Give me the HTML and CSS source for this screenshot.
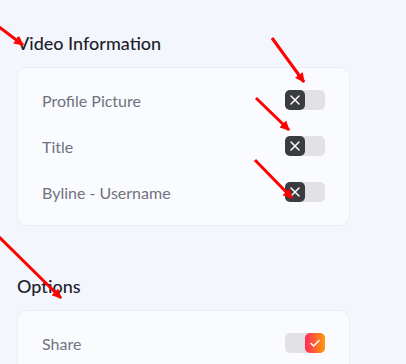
FILE: index.html
```html
<!DOCTYPE html>
<html lang="en">
<head>
    <meta charset="UTF-8">
    <meta name="viewport" content="width=device-width, initial-scale=1.0">
    <title>Video Settings</title>
    <link rel="stylesheet" href="styles.css">
</head>
<body>
    <div class="settings">
        <h2 class="section-title">Video Information</h2>
        <div class="card">
            <div class="row">
                <span class="label">Profile Picture</span>
                <span class="toggle off"><span class="knob"><svg viewBox="0 0 20 20"><path d="M6 6L14 14M14 6L6 14"/></svg></span></span>
            </div>
            <div class="row">
                <span class="label">Title</span>
                <span class="toggle off"><span class="knob"><svg viewBox="0 0 20 20"><path d="M6 6L14 14M14 6L6 14"/></svg></span></span>
            </div>
            <div class="row">
                <span class="label">Byline - Username</span>
                <span class="toggle off"><span class="knob"><svg viewBox="0 0 20 20"><path d="M6 6L14 14M14 6L6 14"/></svg></span></span>
            </div>
        </div>

        <h2 class="section-title">Options</h2>
        <div class="card">
            <div class="row">
                <span class="label">Share</span>
                <span class="toggle on"><span class="knob"><svg viewBox="0 0 20 20"><path d="M6 10.5L8.7 13L14 7.5"/></svg></span></span>
            </div>
        </div>
    </div>

    <!-- annotation arrows -->
    <svg class="arrows" viewBox="0 0 406 364">
        <defs>
            <marker id="head" viewBox="0 0 10 10" refX="9" refY="5" markerWidth="3.6" markerHeight="3.2" orient="auto">
                <path d="M0 0L10 5L0 10z" fill="#ff0000"/>
            </marker>
        </defs>
        <line x1="-2" y1="26" x2="23" y2="45" marker-end="url(#head)"/>
        <line x1="272" y1="38" x2="304" y2="82" marker-end="url(#head)"/>
        <line x1="256" y1="98" x2="289" y2="130" marker-end="url(#head)"/>
        <line x1="255" y1="160" x2="292" y2="198" marker-end="url(#head)"/>
        <line x1="-2" y1="236" x2="61" y2="298" marker-end="url(#head)"/>
    </svg>
</body>
</html>
```

FILE: styles.css
```css
body {
    font-family: 'Lato', 'Noto Sans', sans-serif;
    margin: 0;
    background: #f4f6fd;
    color: #1d1f2b;
    overflow: hidden;
}

.settings {
    width: 333px;
    padding: 31px 0 0 17px;
}

.section-title {
    font-size: 18px;
    font-weight: 500;
    line-height: 24px;
    margin: 0 0 12px 0;
    color: #1d1f2b;
}

.card + .section-title {
    margin-top: 48px;
}

.card {
    background: #fafbff;
    border: 1px solid #eceef5;
    border-radius: 10px;
    padding: 9px 24px 10px 24px;
}

.row {
    height: 46px;
    display: flex;
    align-items: center;
    justify-content: space-between;
}

.label {
    font-size: 16px;
    color: #6f7380;
}

.toggle {
    width: 40px;
    height: 20px;
    border-radius: 5px;
    background: #e2e2e4;
    display: flex;
}

.toggle.on {
    justify-content: flex-end;
}

.knob {
    width: 20px;
    height: 20px;
    border-radius: 5px;
    display: flex;
    align-items: center;
    justify-content: center;
}

.toggle.off .knob {
    background: #3a3c40;
}

.toggle.on .knob {
    background: linear-gradient(90deg, #ff2b5a, #ff9a0a);
}

.knob svg {
    width: 20px;
    height: 20px;
    fill: none;
    stroke: #ffffff;
    stroke-width: 1.5;
    stroke-linecap: round;
    stroke-linejoin: round;
}

.arrows {
    position: absolute;
    top: 0;
    left: 0;
    width: 406px;
    height: 364px;
    pointer-events: none;
}

.arrows line {
    stroke: #ff0000;
    stroke-width: 3;
}
```
